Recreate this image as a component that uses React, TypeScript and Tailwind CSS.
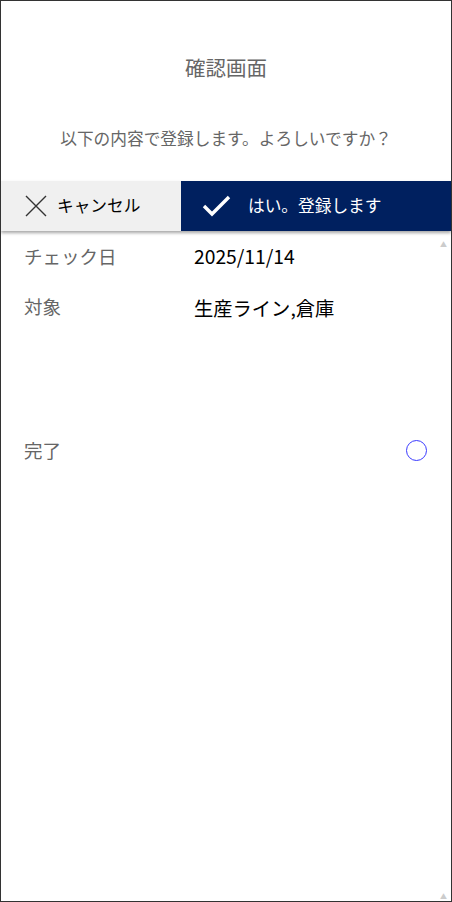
import React from "react";

const font = { fontFamily: '"Noto Sans CJK JP", "Noto Sans", sans-serif' };

// One label/value row of the confirmation list
const Row: React.FC<{ label: string; children?: React.ReactNode; className?: string }> = ({
  label,
  children,
  className,
}) => (
  <div className={`flex items-start pl-[23px] pr-[24px] ${className ?? ""}`}>
    <div className="w-[170px] text-[18.5px] leading-[28px] text-[#666666]">{label}</div>
    <div className="flex-1 text-[19.3px] leading-[28px] text-black">{children}</div>
  </div>
);

export default function App() {
  return (
    <div
      className="w-[452px] h-[902px] border border-[#333333] bg-white flex flex-col relative overflow-hidden"
      style={font}
    >
      <div className="pt-[52px] text-center text-[20.5px] leading-[28px] text-[#666666]">確認画面</div>
      <div className="mt-[44px] text-center text-[16.7px] leading-[26px] text-[#666666]">
        以下の内容で登録します。よろしいですか？
      </div>

      {/* button bar */}
      <div className="mt-[30px] flex h-[50px] shadow-[0_2px_3px_rgba(0,0,0,0.35)] relative z-10">
        <button className="w-[180px] bg-[#f0f0f0] flex items-center pl-[24px] gap-[10px] text-[16.7px] text-black">
          <svg width="22" height="22" viewBox="0 0 22 22" fill="none" stroke="#333" strokeWidth="1.4">
            <path d="M1 1L21 21M21 1L1 21" />
          </svg>
          キャンセル
        </button>
        <button className="flex-1 bg-[#00205f] flex items-center pl-[21px] gap-[17px] text-[16.7px] text-white">
          <svg width="29" height="22" viewBox="0 0 29 22" fill="none" stroke="#fff" strokeWidth="3.4">
            <path d="M2 11L10 19L27 2" />
          </svg>
          はい。登録します
        </button>
      </div>

      <div className="flex flex-col pt-[11px]">
        <Row label="チェック日">2025/11/14</Row>
        <Row label="対象" className="mt-[22px]">
          <span className="relative top-[2px]">生産ライン,倉庫</span>
        </Row>
        <div className="mt-[116px] flex items-center pl-[23px] pr-[24px]">
          <div className="flex-1 text-[18.5px] leading-[28px] text-[#666666]">完了</div>
          <div className="w-[21px] h-[21px] rounded-full border-[1.5px] border-[#3a3aff]" />
        </div>
      </div>

      {/* scrollbar arrows */}
      <div className="absolute right-[4px] top-[240px] text-[7px] leading-none text-[#cccccc]">▲</div>
      <div className="absolute right-[4px] bottom-[1px] text-[7px] leading-none text-[#cccccc]">▲</div>
    </div>
  );
}
